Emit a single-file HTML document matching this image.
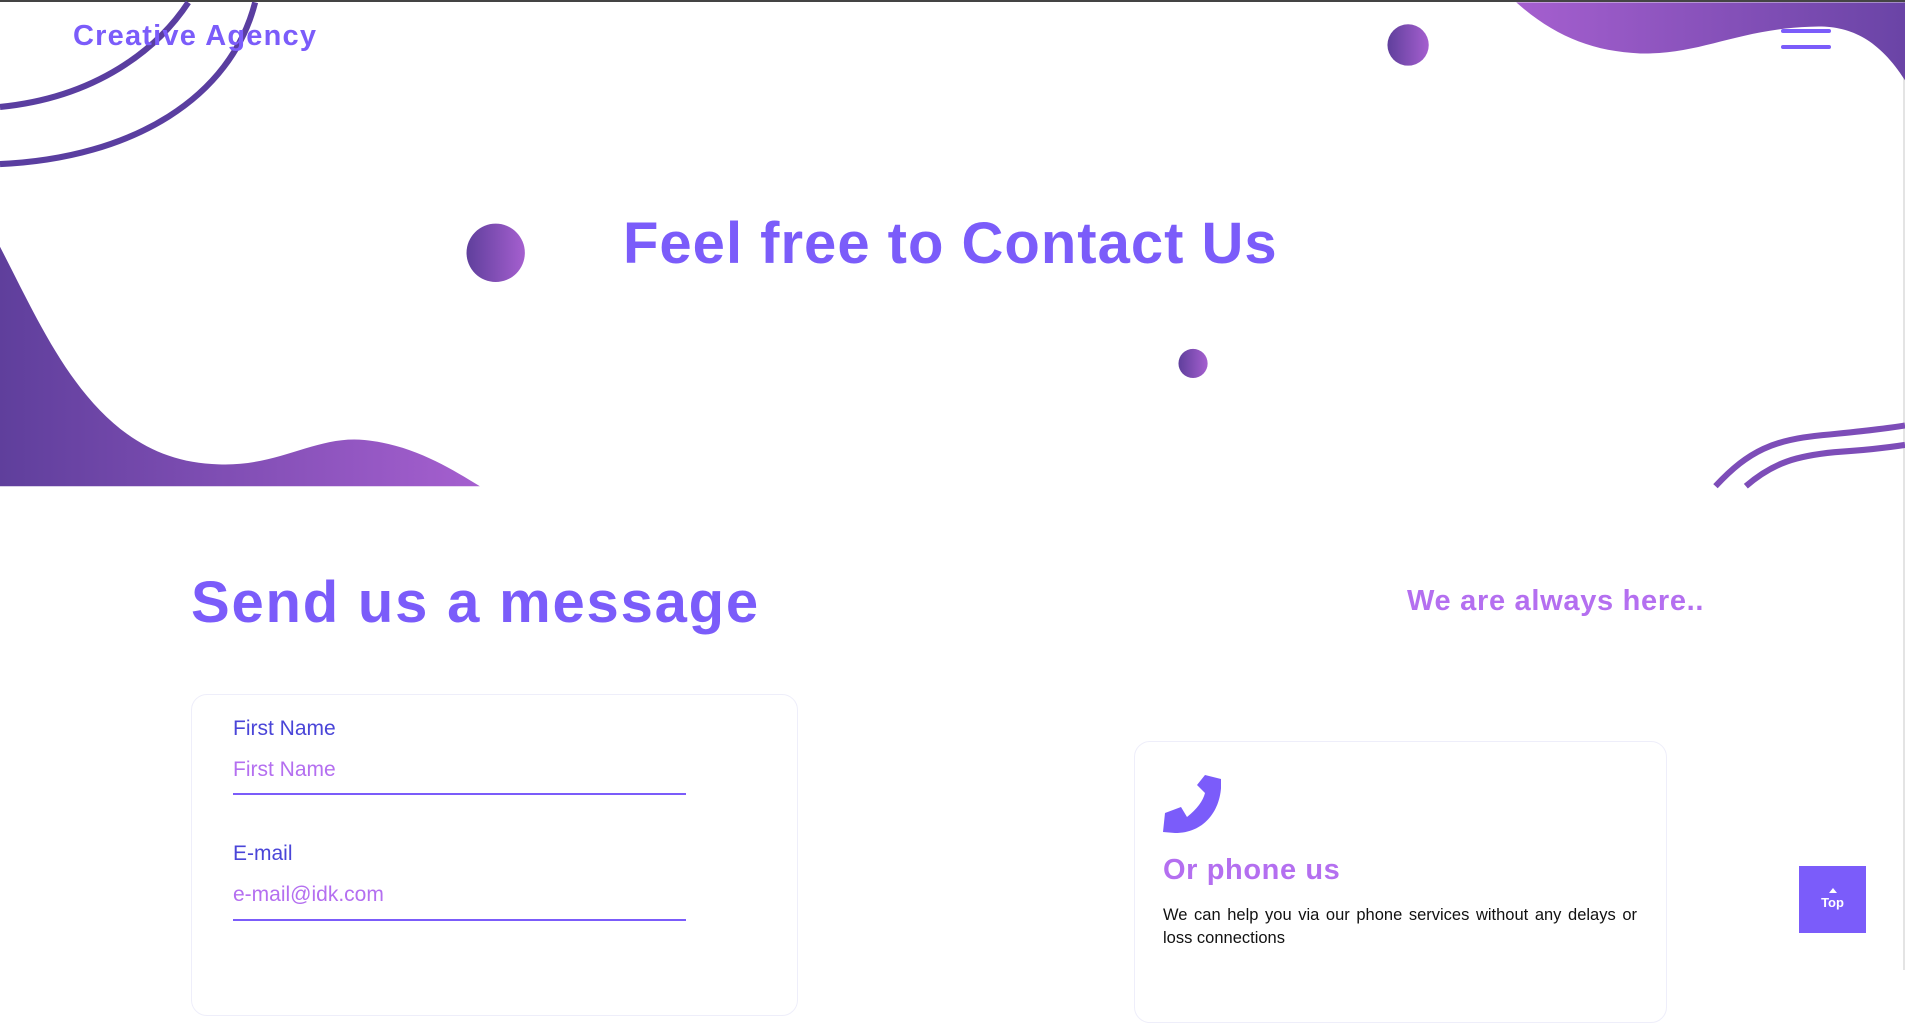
<!DOCTYPE html>
<html><head><meta charset="utf-8"><style>
html,body{margin:0;padding:0;width:1905px;height:970px;overflow:hidden;background:#fff;font-family:"Liberation Sans",sans-serif}
.abs{position:absolute}
.t{position:absolute;white-space:nowrap;font-weight:bold;color:#7b5cfa}
</style></head><body>
<div class="abs" style="left:0;top:0;width:1905px;height:2px;background:#444"></div>
<div class="abs" style="right:0;top:2px;width:2px;height:968px;background:#e4e4e4"></div>
<svg class="abs" style="left:0;top:0" width="1905" height="970" viewBox="0 0 1568 798" preserveAspectRatio="none">
<defs>
<linearGradient id="g" x1="0" x2="1"><stop offset="0" stop-color="#5f3f9c"/><stop offset="1" stop-color="#a55fcf"/></linearGradient>
<linearGradient id="g2" x1="0" x2="1"><stop offset="0" stop-color="#a55fcf"/><stop offset="1" stop-color="#6a44a6"/></linearGradient>
</defs>
<path d="M0 88 C80 80 130 40 155 2" fill="none" stroke="#5a3ea0" stroke-width="5"/>
<path d="M0 135 C110 130 190 80 210 2" fill="none" stroke="#5a3ea0" stroke-width="5"/>
<path d="M1248 2 L1568 2 L1568 66 C1545 30 1520 20 1490 22 C1430 24 1400 45 1350 44 C1310 42 1280 30 1248 2 Z" fill="url(#g2)"/>
<path d="M0 203 C40 280 80 380 180 382 C230 384 260 358 300 362 C340 366 370 385 395 400 L0 400 Z" fill="url(#g)"/>
<path d="M1412 400 C1440 370 1460 362 1500 358 C1530 355 1550 353 1568 350" fill="none" stroke="#7d4db8" stroke-width="5"/>
<path d="M1437 400 C1460 380 1480 375 1510 372 C1540 370 1555 368 1568 366" fill="none" stroke="#7d4db8" stroke-width="5"/>
<circle cx="1159" cy="37" r="17" fill="url(#g)"/>
<circle cx="408" cy="208" r="24" fill="url(#g)"/>
<circle cx="982" cy="299" r="12" fill="url(#g)"/>
</svg>
<div class="t" style="left:73px;top:20px;font-size:29px;letter-spacing:1.2px">Creative Agency</div>
<div class="abs" style="left:1781px;top:29px;width:50px;height:4px;background:#7b5cfa;border-radius:2px"></div>
<div class="abs" style="left:1781px;top:45px;width:50px;height:4px;background:#7b5cfa;border-radius:2px"></div>
<div class="t" style="left:623px;top:210px;font-size:58px;letter-spacing:1px">Feel free to Contact Us</div>
<div class="t" style="left:191px;top:569px;font-size:58px;letter-spacing:1.8px">Send us a message</div>
<div class="t" style="left:1407px;top:585px;font-size:29px;color:#b46ff0;letter-spacing:0.7px">We are always here..</div>
<div class="abs" style="left:191px;top:694px;width:605px;height:320px;border:1px solid #eeeefa;border-radius:16px"></div>
<div class="abs" style="left:233px;top:717px;font-size:21px;color:#4a45d8">First Name</div>
<div class="abs" style="left:233px;top:758px;font-size:21px;color:#b46ff0">First Name</div>
<div class="abs" style="left:233px;top:793px;width:453px;height:2px;background:#7b5cfa"></div>
<div class="abs" style="left:233px;top:842px;font-size:21px;color:#4a45d8">E-mail</div>
<div class="abs" style="left:233px;top:883px;font-size:21px;color:#b46ff0">e-mail@idk.com</div>
<div class="abs" style="left:233px;top:919px;width:453px;height:2px;background:#7b5cfa"></div>
<div class="abs" style="left:1134px;top:741px;width:531px;height:280px;border:1px solid #eeeefa;border-radius:16px"></div>
<svg class="abs" style="left:1163px;top:775px" width="58" height="59" viewBox="0 0 58 59"><path d="M42 0 L58 4 C60 30 45 58 12 58 L0 57 L2 38 L18 32 L24 42 C34 34 40 26 42 18 L34 10 Z" fill="#7b5cfa"/></svg>
<div class="t" style="left:1163px;top:854px;font-size:29px;color:#b46ff0;letter-spacing:0.6px">Or phone us</div>
<div class="abs" style="left:1163px;top:904px;width:474px;font-size:16.5px;line-height:23px;color:#111;text-align:justify">We can help you via our phone services without any delays or loss connections</div>
<div class="abs" style="left:1799px;top:866px;width:67px;height:67px;background:#7b5cfa;color:#fff;font-size:13px;font-weight:bold;text-align:center">
<div style="margin:22px auto 0;width:0;height:0;border-left:4px solid transparent;border-right:4px solid transparent;border-bottom:5px solid #fff"></div>
<div style="margin-top:2px">Top</div></div>
</body></html>
